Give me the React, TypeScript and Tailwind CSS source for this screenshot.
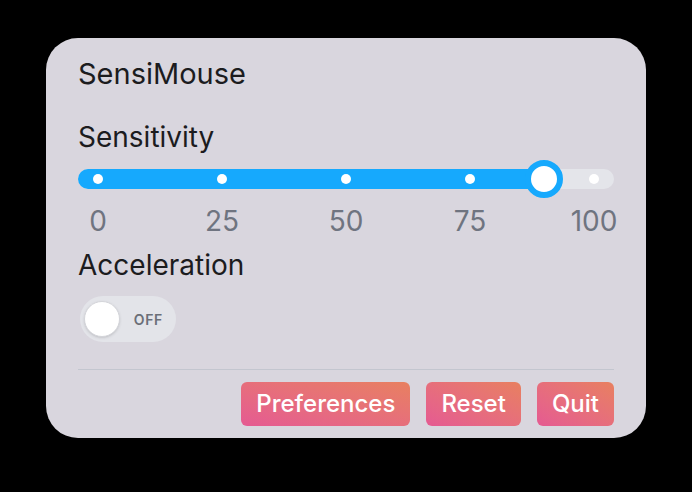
import { useState } from 'react'

const ticks = [0, 25, 50, 75, 100]

export default function App() {
  const [value] = useState(90)
  const [accel, setAccel] = useState(false)

  // dots sit 20px in from each track end
  const pct = value / 100

  return (
    <div className="min-h-[492px] w-[692px] bg-black pl-[46px] pt-[38px] font-['Inter',sans-serif]">
      <div className="flex h-[400px] w-[600px] flex-col rounded-[32px] bg-[#d9d6de] px-8 pb-3 pt-5">
        <h1 className="text-[29px] font-normal leading-8 text-[#1c1c1e]">SensiMouse</h1>

        <h2 className="mt-[31px] text-[28px] leading-8 text-[#1c1c1e]">Sensitivity</h2>

        {/* slider */}
        <div className="relative mt-4 h-5 w-full rounded-full bg-[#e4e5ea]">
          <div
            className="absolute left-0 top-0 h-5 rounded-full bg-[#16a9fd]"
            style={{ width: `calc(20px + ${pct} * (100% - 40px))` }}
          />
          <div className="absolute inset-x-5 top-0 h-5">
            {ticks.map((t) => (
              <span
                key={t}
                className="absolute top-[5px] h-[10px] w-[10px] -translate-x-1/2 rounded-full bg-white"
                style={{ left: `${t}%` }}
              />
            ))}
            <span
              className="absolute top-1/2 h-[38px] w-[38px] -translate-x-1/2 -translate-y-1/2 rounded-full border-[6px] border-[#16a9fd] bg-white"
              style={{ left: `${value}%` }}
            />
          </div>
        </div>

        <div className="relative mx-5 mt-4 h-8">
          {ticks.map((t) => (
            <span
              key={t}
              className="absolute top-0 -translate-x-1/2 text-[28px] leading-8 text-[#6f7480]"
              style={{ left: `${t}%` }}
            >
              {t}
            </span>
          ))}
        </div>

        <h2 className="mt-3 text-[28px] leading-8 text-[#1c1c1e]">Acceleration</h2>

        {/* toggle */}
        <button
          type="button"
          onClick={() => setAccel(!accel)}
          className="mt-[15px] ml-0.5 flex h-[46px] w-[96px] items-center rounded-full bg-[#e3e4e9] pl-[4px] pr-[13px]"
        >
          <span className="h-[36px] w-[36px] rounded-full border border-[#d4d5da] bg-white shadow-sm" />
          <span className="ml-auto text-[14px] font-semibold tracking-wider text-[#6b6f78]">
            {accel ? 'ON' : 'OFF'}
          </span>
        </button>

        <div className="mt-[27px] h-px w-full bg-[#c3c6cf]" />

        <div className="mt-3 flex justify-end gap-4">
          {['Preferences', 'Reset', 'Quit'].map((label) => (
            <button
              key={label}
              type="button"
              className="h-[44px] rounded-md bg-gradient-to-tr from-[#e55a92] to-[#e8805f] px-[15px] text-[24px] font-medium text-white"
            >
              {label}
            </button>
          ))}
        </div>
      </div>
    </div>
  )
}
